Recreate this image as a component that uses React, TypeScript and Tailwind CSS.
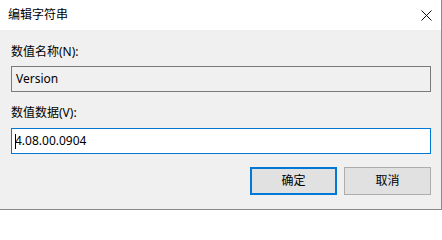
export default function App() {
  const font = { fontFamily: '"Noto Sans", "Noto Sans CJK SC", sans-serif' };
  return (
    <div
      className="w-[442px] h-[210px] bg-[#f0f0f0] border-r border-b border-[#8a8a8a] text-[12px] text-black flex flex-col"
      style={font}
    >
      {/* title bar */}
      <div className="h-[30px] bg-white flex items-center justify-between pl-[8px] pr-[9px] shrink-0">
        <span className="leading-[16px]">编辑字符串</span>
        <svg width="11" height="11" viewBox="0 0 11 11" className="text-[#111]">
          <path d="M0.5 0.5 L10.5 10.5 M10.5 0.5 L0.5 10.5" stroke="currentColor" strokeWidth="1" />
        </svg>
      </div>

      <div className="flex flex-col pl-[11px] pr-[10px]">
        <div className="mt-[14px] leading-[16px]">数值名称(N):</div>
        <div className="mt-[6px] h-[26px] border border-[#7a7a7a] bg-[#f0f0f0] flex items-center pl-[4px]">
          Version
        </div>

        <div className="mt-[13px] leading-[16px]">数值数据(V):</div>
        <div className="mt-[7px] h-[26px] border border-[#0078d7] bg-white flex items-center pl-[3px]">
          <span className="w-px h-[15px] bg-black mr-[-1px]" />
          <span>4.08.00.0904</span>
        </div>

        <div className="mt-[13px] flex justify-end gap-[7px]">
          <button className="w-[87px] h-[28px] border-2 border-[#0078d7] bg-[#e1e1e1] flex items-center justify-center">
            确定
          </button>
          <button className="w-[87px] h-[28px] border border-[#adadad] bg-[#e1e1e1] flex items-center justify-center">
            取消
          </button>
        </div>
      </div>
    </div>
  );
}
